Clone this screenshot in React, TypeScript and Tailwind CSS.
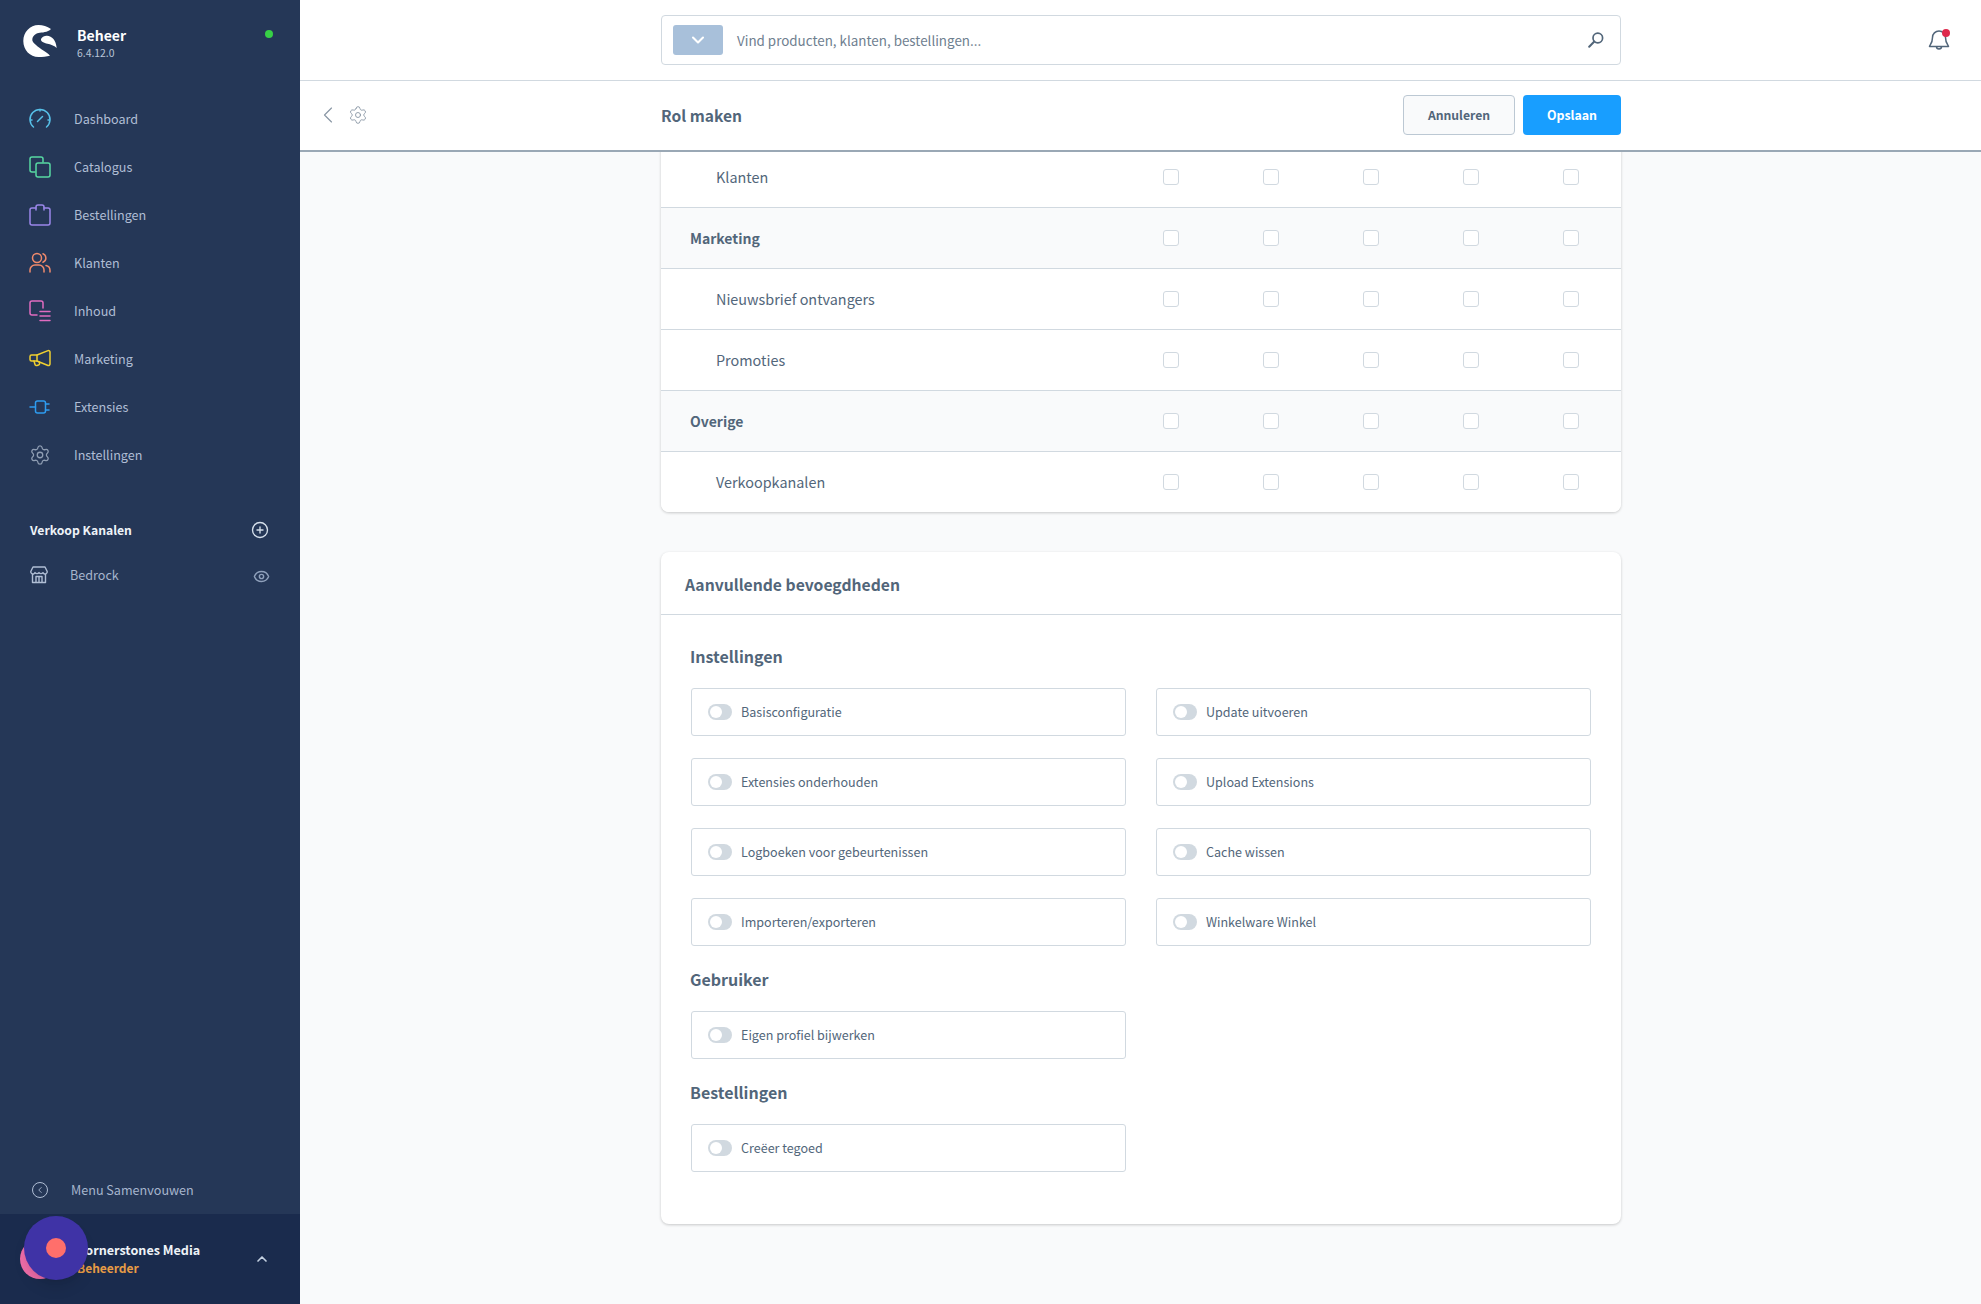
import React from 'react';
import { ChevronDown, ChevronLeft, ChevronUp, CirclePlus, Eye, Settings } from 'lucide-react';

const iconProps = {
  width: 22,
  height: 22,
  viewBox: '0 0 22 22',
  fill: 'none',
  stroke: 'currentColor',
  strokeWidth: 1.5,
  strokeLinecap: 'round' as const,
  strokeLinejoin: 'round' as const,
};

const GaugeIcon = () => (
  <svg {...iconProps}>
    <path d="M4.500 19A10 10 0 1 1 17.500 19" />
    <path d="M1.500 12h1.500M19 12h1.500M11 1.500V3M8.500 13.500l5-5" />
  </svg>
);

const CatalogIcon = () => (
  <svg {...iconProps}>
    <path d="M6 16H3a2 2 0 0 1-2-2V3a2 2 0 0 1 2-2h9a2 2 0 0 1 2 2v3" />
    <rect x="7" y="7" width="14" height="14" rx="2" />
  </svg>
);

const OrdersIcon = () => (
  <svg {...iconProps}>
    <path d="M7 4H3a2 2 0 0 0-2 2v13a2 2 0 0 0 2 2h16a2 2 0 0 0 2-2V6a2 2 0 0 0-2-2h-4" />
    <path d="M7 6V3a2 2 0 0 1 2-2h4a2 2 0 0 1 2 2v3" />
  </svg>
);

const CustomersIcon = () => (
  <svg {...iconProps}>
    <circle cx="8" cy="6" r="4.500" />
    <path d="M1 20v-2a5 5 0 0 1 5-5h4a5 5 0 0 1 5 5v2" />
    <path d="M14 1.800a4.500 4.500 0 0 1 0 8.400M17 13.400a5 5 0 0 1 4 4.800v1.800" />
  </svg>
);

const ContentIcon = () => (
  <svg {...iconProps}>
    <path d="M8 15H3a2 2 0 0 1-2-2V3a2 2 0 0 1 2-2h9a2 2 0 0 1 2 2v5" />
    <path d="M11 11.500h10M11 16h10M11 20.500h10" />
  </svg>
);

const MarketingIcon = () => (
  <svg {...iconProps}>
    <path d="M8 7H2.500A1.500 1.500 0 0 0 1 8.500v3A1.500 1.500 0 0 0 2.500 13H8l11 4.500a1.500 1.500 0 0 0 2-1.400V4a1.500 1.500 0 0 0-2-1.400z" />
    <path d="M8 7v6M5 13l1 3.500a1.500 1.500 0 0 0 2 1l1.500-.5a1.500 1.500 0 0 0 1-2l-.3-1" />
  </svg>
);

const ExtensionsIcon = () => (
  <svg {...iconProps}>
    <rect x="6.500" y="5" width="10" height="12" rx="2" />
    <path d="M1 11h5.500M16.500 8h3.500M16.500 14h3.500" />
  </svg>
);

const StoreIcon = () => (
  <svg width="18" height="18" viewBox="0 0 18 18" fill="none" stroke="currentColor" strokeWidth="1.400" strokeLinejoin="round">
    <path d="M2.500 8v8.500h13V8" />
    <path d="M3 1h12l2 4a2 2 0 0 1-4 1.600A2.400 2.400 0 0 1 9 6.600a2.400 2.400 0 0 1-4 0A2 2 0 0 1 1 5z" />
    <path d="M6 16.500V10.500h6v6M9 10.500v6" />
  </svg>
);

const SearchIcon = () => (
  <svg width="16" height="16" viewBox="0 0 16 16" fill="none" stroke="currentColor" strokeLinecap="round">
    <circle cx="9.800" cy="6" r="4.800" strokeWidth="1.700" />
    <path d="M6.300 9.500 1.200 14.800" strokeWidth="2" />
  </svg>
);

// shopware mark: thick C plus the small blob inside it
const Logo = () => (
  <svg width="34" height="34" viewBox="0 0 34 34" fill="#fff">
    <path d="M28 4C24 1.500 20 0 15.500 0 7 0 .3 7 .3 16c0 9 6.700 16 15.200 16 4 0 8-.5 11.500-1.300-3-3.700-10-6.700-14-10.700-2.500-2.200-3.700-3.500-3.700-5 0-4 3.200-6.500 6.200-7 3.500-.6 9-.5 12.500-4z" />
    <path d="M18 14c1.500-2.500 4-3.500 6-3.300 5 .5 9 4.300 9.700 12.300-2.700-2.500-6.200-3.500-9.200-4.200-3.500-.8-7-2.300-6.500-4.800z" />
  </svg>
);

const navItems = [
  { label: 'Dashboard', color: 'text-[#57c0e8]', icon: <GaugeIcon /> },
  { label: 'Catalogus', color: 'text-[#57d9a3]', icon: <CatalogIcon /> },
  { label: 'Bestellingen', color: 'text-[#9a87ea]', icon: <OrdersIcon /> },
  { label: 'Klanten', color: 'text-[#f08a6c]', icon: <CustomersIcon /> },
  { label: 'Inhoud', color: 'text-[#e06cc0]', icon: <ContentIcon /> },
  { label: 'Marketing', color: 'text-[#f0d030]', icon: <MarketingIcon /> },
  { label: 'Extensies', color: 'text-[#2e9cf0]', icon: <ExtensionsIcon /> },
  { label: 'Instellingen', color: 'text-[#8f9db3]', icon: <Settings size={24} strokeWidth={1.4} /> },
];

const rows = [
  { label: 'Klanten', group: false },
  { label: 'Marketing', group: true },
  { label: 'Nieuwsbrief ontvangers', group: false },
  { label: 'Promoties', group: false },
  { label: 'Overige', group: true },
  { label: 'Verkoopkanalen', group: false },
];

const Toggle = ({ label }: { label: string }) => (
  <div className="flex h-12 items-center rounded-[3px] border border-[#d1d9e0] bg-white pl-4">
    <span className="relative h-4 w-6 shrink-0 rounded-full bg-[#d1d9e0]">
      <span className="absolute left-[2px] top-[2px] h-3 w-3 rounded-full bg-white" />
    </span>
    <span className="ml-[9px] text-[12.55px] text-[#52667a]">{label}</span>
  </div>
);

const Heading = ({ children }: { children: React.ReactNode }) => (
  <h3 className="-ml-px mb-[19px] h-6 text-[16px] font-semibold leading-[23px] text-[#52667a]">{children}</h3>
);

export default function App() {
  return (
    <div
      className="flex h-[1304px] w-[1981px] overflow-hidden bg-[#f9fafb]"
      style={{ fontFamily: '"Noto Sans CJK SC", "Noto Sans", sans-serif' }}
    >
      {/* sidebar */}
      <aside className="relative flex w-[300px] shrink-0 flex-col bg-[#253757]">
        <div className="flex h-[95px] items-start pl-[23px] pr-[27px] pt-[25px]">
          <Logo />
          <div className="ml-5 flex-1">
            <div className="text-[14px] font-semibold leading-[21px] text-white">Beheer</div>
            <div className="text-[10.4px] leading-[14px] text-[#b8c4d6]">6.4.12.0</div>
          </div>
          <span className="mt-[5px] h-2 w-2 rounded-full bg-[#37d046]" />
        </div>

        <nav className="flex flex-col">
          {navItems.map(item => (
            <div key={item.label} className="flex h-12 items-center pl-[29px]">
              <span className={`flex w-[22px] justify-center ${item.color}`}>{item.icon}</span>
              <span className="ml-[23px] text-[12.6px] text-[#b0bed5]">{item.label}</span>
            </div>
          ))}
        </nav>

        <div className="mt-[31px] flex h-10 items-center justify-between pl-[30px] pr-[31px]">
          <span className="text-[12.2px] font-semibold text-[#eef3f8]">Verkoop Kanalen</span>
          <CirclePlus size={18} strokeWidth={1.800} className="text-[#d6e0ec]" />
        </div>
        <div className="mt-[5px] flex h-10 items-center justify-between pl-[30px] pr-[30px]">
          <div className="flex items-center">
            <span className="text-[#b0bed5]"><StoreIcon /></span>
            <span className="ml-[22px] text-[12.6px] text-[#a6b5cd]">Bedrock</span>
          </div>
          <Eye size={17} strokeWidth={2} className="mt-[3px] text-[#8fa0bb]" />
        </div>

        <div className="mt-auto flex h-[48px] items-center pl-[32px]">
          <span className="flex h-4 w-4 items-center justify-center rounded-full border-[1.5px] border-[#b0bed5] text-[#b0bed5]">
            <ChevronLeft size={10} strokeWidth={2} />
          </span>
          <span className="ml-[23px] text-[12.6px] text-[#a6b5cd]">Menu Samenvouwen</span>
        </div>

        <div className="flex h-[90px] items-center bg-[#1a2b4d] pl-5 pr-[30px]">
          <span className="h-10 w-10 shrink-0 rounded-full bg-[#ee6ca8]" />
          <div className="ml-[17px] flex-1 pb-[2px]">
            <div className="text-[12.6px] font-semibold leading-[18px] text-[#eef3f8]">Cornerstones Media</div>
            <div className="text-[12px] font-semibold leading-[17px] text-[#e79c45]">Beheerder</div>
          </div>
          <ChevronUp size={16} strokeWidth={2.500} className="text-[#c3d0e0]" />
        </div>

        {/* chat launcher floating over the user block */}
        <div className="absolute bottom-[24px] left-6 flex h-16 w-16 items-center justify-center rounded-full bg-[#3f33a6] shadow-lg">
          <span className="h-5 w-5 rounded-full bg-[#ff6f6b]" />
        </div>
      </aside>

      {/* main */}
      <main className="flex min-w-0 flex-1 flex-col">
        <header className="flex h-[81px] shrink-0 items-center border-b border-[#d1d9e0] bg-white pl-[361px] pr-[33px]">
          <div className="flex h-[50px] w-[960px] items-center rounded-[4px] border border-[#d1d9e0] bg-white pl-[11px] pr-[16px]">
            <span className="flex h-[30px] w-[50px] items-center justify-center rounded-[3px] bg-[#a8c0da] text-white">
              <ChevronDown size={20} strokeWidth={2.500} />
            </span>
            <span className="ml-[14px] flex-1 text-[13.4px] text-[#6f8090]">Vind producten, klanten, bestellingen...</span>
            <span className="text-[#52667a]"><SearchIcon /></span>
          </div>
          <div className="relative ml-auto mr-[-2px] text-[#52667a]">
            <svg width="22" height="24" viewBox="0 0 22 24" fill="none" stroke="currentColor" strokeWidth="1.500" strokeLinejoin="round">
              <path d="M11 3a6.500 6.500 0 0 0-6.500 6.500c0 6-3 7.500-3 9h19c0-1.500-3-3-3-9A6.500 6.500 0 0 0 11 3z" />
              <path d="M8.500 18.500a2.500 2.500 0 0 0 5 0" />
            </svg>
            <span className="absolute right-[0px] top-[1px] h-2 w-2 rounded-full bg-[#de294c]" />
          </div>
        </header>

        <div className="z-10 flex h-[71px] shrink-0 items-center border-b-2 border-[#9aa8b5] bg-white pb-px pl-[14px]">
          <ChevronLeft size={28} strokeWidth={1} className="text-[#8a97a5]" />
          <Settings size={20} strokeWidth={1.100} className="ml-[6px] text-[#8a97a5]" />
          <div className="ml-[293px] flex w-[960px] items-center justify-between">
            <span className="pt-px text-[15.6px] font-semibold text-[#52667a]">Rol maken</span>
            <div className="flex gap-2">
              <button className="h-10 w-28 rounded-[4px] border border-[#bcc8d3] bg-[#f9fafb] text-[12.2px] font-semibold text-[#52667a]">Annuleren</button>
              <button className="h-10 w-[98px] rounded-[4px] bg-[#189eff] text-[12.4px] font-semibold text-white">Opslaan</button>
            </div>
          </div>
        </div>

        {/* scrolled content */}
        <div className="min-h-0 flex-1 overflow-hidden">
          <div className="-mt-[5px] ml-[361px] w-[960px]">
            <section className="overflow-hidden rounded-b-lg bg-white shadow-[0_1px_3px_rgba(0,0,0,0.2)]">
              {rows.map(row => (
                <div
                  key={row.label}
                  className={`flex h-[61px] items-center border-b border-[#d1d9e0] last:h-[60px] last:border-b-0 ${row.group ? 'bg-[#f9fafb]' : 'bg-white'}`}
                >
                  <span
                    className={`flex-1 text-[#52667a] ${row.group ? 'pl-[29px] pt-px text-[14px] font-semibold' : 'pl-[55px] text-[14.4px]'}`}
                  >
                    {row.label}
                  </span>
                  <div className="flex">
                    {[0, 1, 2, 3, 4].map(i => (
                      <span key={i} className="flex w-[100px] justify-center">
                        <span className="h-4 w-4 rounded-[3px] border border-[#d1d9e0] bg-white" />
                      </span>
                    ))}
                  </div>
                </div>
              ))}
            </section>

            <section className="mt-10 rounded-lg bg-white shadow-[0_1px_3px_rgba(0,0,0,0.2)]">
              <div className="flex h-[63px] items-center border-b border-[#d1d9e0] pl-6 pt-[3px]">
                <h2 className="text-[15.7px] font-semibold text-[#52667a]">Aanvullende bevoegdheden</h2>
              </div>
              <div className="px-[30px] pb-[30px] pt-[30px]">
                <Heading>Instellingen</Heading>
                <div className="mb-[22px] grid grid-cols-2 gap-x-[30px] gap-y-[22px]">
                  <Toggle label="Basisconfiguratie" />
                  <Toggle label="Update uitvoeren" />
                  <Toggle label="Extensies onderhouden" />
                  <Toggle label="Upload Extensions" />
                  <Toggle label="Logboeken voor gebeurtenissen" />
                  <Toggle label="Cache wissen" />
                  <Toggle label="Importeren/exporteren" />
                  <Toggle label="Winkelware Winkel" />
                </div>
                <Heading>Gebruiker</Heading>
                <div className="mb-[22px] grid grid-cols-2 gap-x-[30px]">
                  <Toggle label="Eigen profiel bijwerken" />
                </div>
                <Heading>Bestellingen</Heading>
                <div className="mb-[22px] grid grid-cols-2 gap-x-[30px]">
                  <Toggle label="Creëer tegoed" />
                </div>
              </div>
            </section>
          </div>
        </div>
      </main>
    </div>
  );
}
